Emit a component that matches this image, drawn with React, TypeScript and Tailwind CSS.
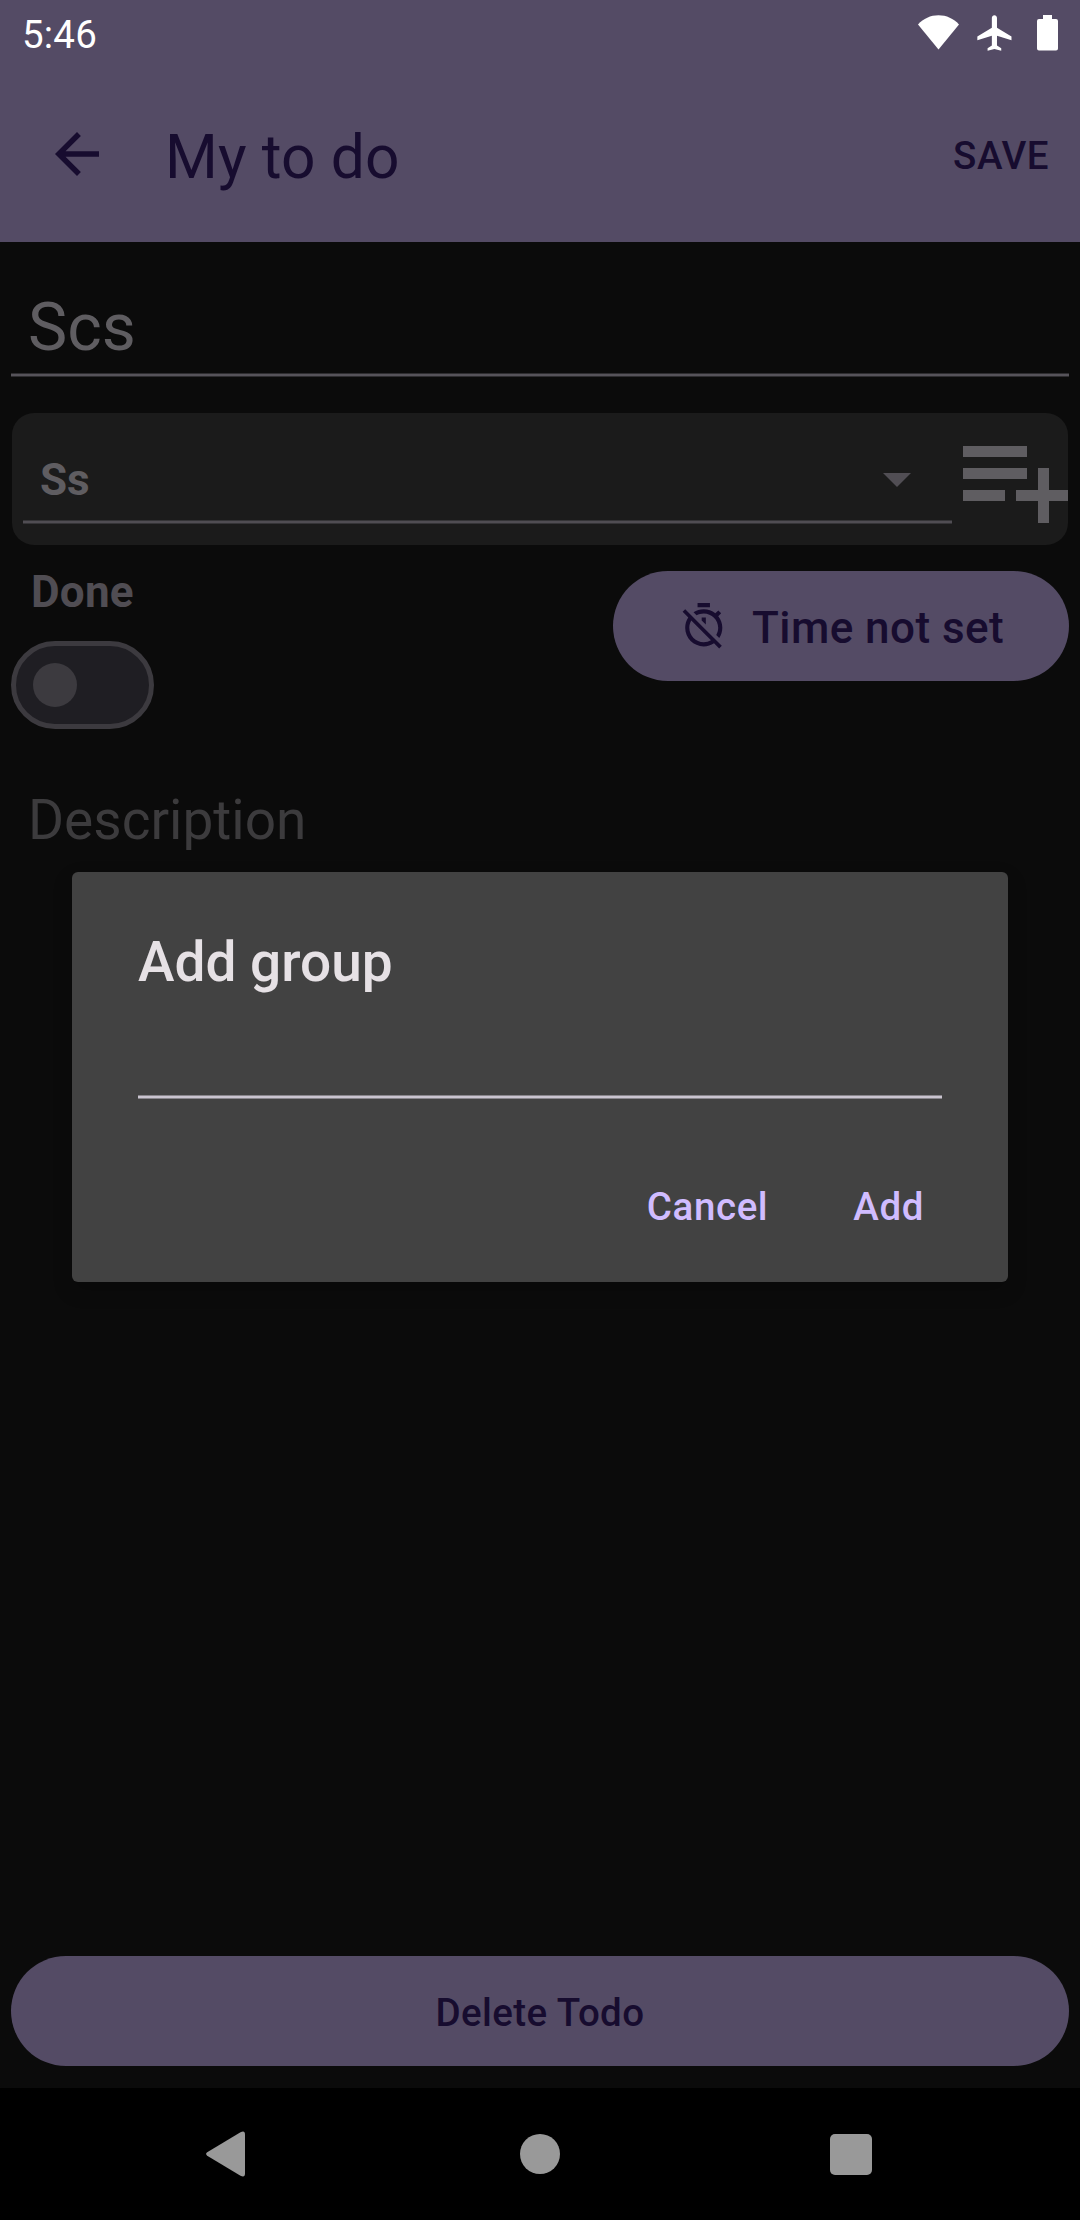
import type { ReactNode } from "react";

function Underline({ className }: { className: string }) {
  return <div className={`h-1 border-y ${className}`} />;
}

function StatusBar() {
  return (
    <div className="flex h-[66px] items-start pl-[22px] text-white">
      <span className="grow text-[38.5px] leading-[70px] tracking-[0.2px]">5:46</span>
      <div className="mt-[15px] flex">
        <svg className="h-[35px] w-[41px]" viewBox="0 0 41 35" fill="currentColor">
          <path d="M20.5 34.5 0 9.5C5.5 3.6 12.5.3 20.5.3S35.5 3.6 41 9.5Z" />
        </svg>
        <svg className="ml-[18px] h-[36px] w-[35px]" viewBox="1.8 1.9 20.5 20.2" preserveAspectRatio="none" fill="currentColor">
          <path d="M22 16v-2l-8.5-5V3.5c0-.83-.67-1.5-1.5-1.5s-1.5.67-1.5 1.5V9L2 14v2l8.5-2.5V19L8 20.5V22l4-1 4 1v-1.5L13.5 19v-5.5L22 16z" />
        </svg>
        <svg className="mr-[22px] ml-[25px] h-[36px] w-[21px]" viewBox="0 0 21 36" fill="currentColor">
          <path d="M6 0h9v4h4a2 2 0 0 1 2 2v27.5a2 2 0 0 1-2 2H2a2 2 0 0 1-2-2V6a2 2 0 0 1 2-2h4z" />
        </svg>
      </div>
    </div>
  );
}

function Toolbar() {
  return (
    <div className="flex h-[176px] items-center pr-[31px] pl-[44px]">
      <svg className="size-[66px]" viewBox="0 0 24 24" fill="currentColor">
        <path d="M20 11H7.83l5.59-5.59L12 4l-8 8 8 8 1.41-1.41L7.83 13H20v-2z" />
      </svg>
      <h1 className="ml-[55px] grow pt-[7px] text-[60.5px] leading-[72px] tracking-[0.1px]">My to do</h1>
      <button className="pt-[4px] text-[38.5px] leading-[46px] font-medium tracking-[0.5px]">SAVE</button>
    </div>
  );
}

function TimerOffIcon() {
  return (
    <svg className="size-[49.5px]" viewBox="0 0 24 24" fill="currentColor">
      <path d="M19.04 4.55l-1.42 1.42C16.07 4.74 14.12 4 12 4c-1.83 0-3.53.55-4.95 1.48l1.46 1.46C9.53 6.35 10.73 6 12 6c3.87 0 7 3.13 7 7 0 1.27-.35 2.47-.94 3.49l1.45 1.45C20.45 16.53 21 14.83 21 13c0-2.12-.74-4.07-1.97-5.61l1.42-1.42-1.41-1.42zM15 1H9v2h6V1zm-4 8.44l2 2V8h-2v1.44zM3.02 4L1.75 5.27 4.5 8.03C3.55 9.45 3 11.16 3 13c0 4.97 4.02 9 9 9 1.84 0 3.55-.55 4.98-1.5l2.5 2.5 1.27-1.27-7.71-7.71L3.02 4zM12 20c-3.87 0-7-3.13-7-7 0-1.28.35-2.48.95-3.52l9.56 9.56c-1.03.61-2.23.96-3.51.96z" />
    </svg>
  );
}

function GroupPicker() {
  return (
    <div className="mx-px mt-[36px] flex h-[132px] overflow-hidden rounded-[22px] bg-[#1b1b1b]">
      <div className="mr-[11px] ml-[11px] w-[929px]">
        <div className="flex h-[107px] items-start pt-[40px] pr-[41px] pl-[17px]">
          <span className="grow text-[44px] leading-[54px] font-bold text-[#5f5d61]">Ss</span>
          <svg className="mt-[20px] h-[14px] w-[28px]" viewBox="0 0 28 14" fill="#514e54">
            <path d="M0 0h28L14 14z" />
          </svg>
        </div>
        <Underline className="border-[#353437] bg-[#504d53]" />
      </div>
      <svg className="h-[132px] w-[105px]" viewBox="2.364 0 19.09 24" preserveAspectRatio="none" fill="#5f5d61">
        <path d="M14 10H2v2h12v-2zm0-4H2v2h12V6zm4 8v-4h-2v4h-4v2h4v4h2v-4h4v-2h-4zM2 16h8v-2H2v2z" />
      </svg>
    </div>
  );
}

function DialogButton({ children }: { children: ReactNode }) {
  return <button className="text-[38.5px] leading-[46px] font-medium tracking-[0.6px]">{children}</button>;
}

function AddGroupDialog() {
  return (
    <div className="absolute top-[872px] left-[72px] h-[410px] w-[936px] rounded-[6px] bg-[#424242] px-[66px] shadow-[0_8px_20px_rgba(0,0,0,0.2)]">
      <h2 className="pt-[57px] text-[55px] leading-[66px] font-medium text-[#e6e1e5]">Add group</h2>
      <Underline className="mt-[100px] border-[#88858b] bg-[#cac4d0]" />
      <div className="mt-[85px] flex justify-end gap-[85px] pr-[18px] text-[#d0bcff]">
        <DialogButton>Cancel</DialogButton>
        <DialogButton>Add</DialogButton>
      </div>
    </div>
  );
}

function NavigationBar() {
  return (
    <nav className="flex h-[132px] items-center bg-black text-[#999999]">
      <svg className="ml-[206px] h-[46px] w-[39px]" viewBox="0 0 39 46" fill="currentColor">
        <path d="M1.2 21.3 34.5 1.2Q39-1 39 3.5V42.5Q39 47 34.5 44.8L1.2 24.7Q-1 23 1.2 21.3Z" />
      </svg>
      <div className="ml-[275px] size-[40px] rounded-full bg-current" />
      <div className="mt-px ml-[270px] size-[41.5px] rounded-[5px] bg-current" />
    </nav>
  );
}

export default function App() {
  return (
    <div className="relative flex h-[2220px] w-[1080px] flex-col overflow-hidden bg-[#0b0b0b] font-[Roboto,sans-serif]">
      <header className="h-[242px] bg-[#544b65] text-[#170c2f]">
        <StatusBar />
        <Toolbar />
      </header>

      <main className="flex grow flex-col px-[11px]">
        <div className="pt-[46px] pl-[17px] text-[66px] leading-[79px] text-[#5f5d61]">Scs</div>
        <Underline className="mt-[6px] border-[#2e2d30] bg-[#56535a]" />

        <GroupPicker />

        <div className="flex justify-between">
          <div className="pt-[20px]">
            <div className="pl-[20px] text-[44px] leading-[54px] font-bold tracking-[0.25px] text-[#504d53]">Done</div>
            <div className="mt-[22px] flex h-[88px] w-[143px] items-center rounded-full border-[5.5px] border-[#3c3a3f] bg-[#1f1e23] pl-[17px]">
              <div className="size-[44px] rounded-full bg-[#3c3a3f]" />
            </div>
          </div>
          <button className="mt-[26px] flex h-[110px] w-[456px] items-center rounded-full bg-[#544b65] pl-[66px] text-[#170c2f]">
            <TimerOffIcon />
            <span className="ml-[23.5px] pt-[4px] text-[44px] leading-[52px] font-medium tracking-[0.45px]">Time not set</span>
          </button>
        </div>

        <div className="mt-[58px] pl-[17px] text-[55px] leading-[66px] text-[#3c3b3d]">Description</div>

        <button className="mt-auto mb-[22px] h-[110px] rounded-full bg-[#544b65] pt-[3px] text-[38.5px] font-medium tracking-[0.4px] text-[#170c2f]">
          Delete Todo
        </button>
      </main>

      <NavigationBar />
      <AddGroupDialog />
    </div>
  );
}
